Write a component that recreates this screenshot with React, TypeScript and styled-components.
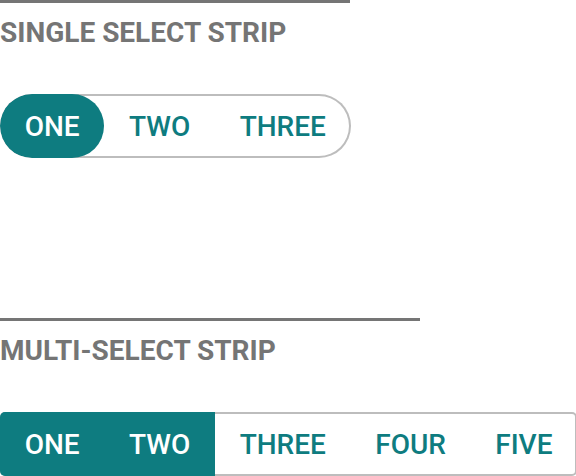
import React, { useState } from "react";
import styled, { createGlobalStyle } from "styled-components";

const Global = createGlobalStyle`
  html, body { margin: 0; padding: 0; background: #ffffff; }
  body { font-family: Roboto, "Noto Sans", sans-serif; }
`;

const TEAL = "#0e7c80";

const Page = styled.div`
  display: flex;
  flex-direction: column;
  width: 576px;
`;

const Section = styled.section<{ $ruleWidth: number; $height?: number }>`
  display: flex;
  flex-direction: column;
  align-items: flex-start;
  height: ${(p) => (p.$height ? `${p.$height}px` : "auto")};
  &::before {
    content: "";
    display: block;
    width: ${(p) => p.$ruleWidth}px;
    height: 3px;
    background: #757575;
  }
`;

const Heading = styled.h2`
  margin: 13px 0 0 0;
  font-family: Roboto, sans-serif;
  font-weight: 700;
  font-size: 28px;
  line-height: 33px;
  color: #757575;
  text-transform: uppercase;
`;

const Strip = styled.div<{ $round: boolean }>`
  margin-top: 45px;
  display: flex;
  height: 64px;
  box-shadow: inset 0 0 0 2px #bdbdbd;
  border-radius: ${(p) => (p.$round ? "32px" : "5px")};
  overflow: hidden;
`;

const Option = styled.button<{ $on: boolean; $round: boolean }>`
  height: 64px;
  padding: 0 24.7px;
  margin: 0;
  border: none;
  background: ${(p) => (p.$on ? TEAL : "transparent")};
  color: ${(p) => (p.$on ? "#ffffff" : TEAL)};
  border-radius: ${(p) => (p.$round ? "32px" : "0")};
  font-family: Roboto, sans-serif;
  font-weight: 500;
  font-size: 28px;
  text-transform: uppercase;
  cursor: pointer;
`;

export default function App() {
  const [single, setSingle] = useState("One");
  const [multi, setMulti] = useState<string[]>(["One", "Two"]);
  const toggle = (v: string) =>
    setMulti((m) => (m.includes(v) ? m.filter((x) => x !== v) : [...m, v]));

  return (
    <Page>
      <Global />
      <Section $ruleWidth={350} $height={318}>
        <Heading>Single Select Strip</Heading>
        <Strip $round>
          {["One", "Two", "Three"].map((v) => (
            <Option key={v} $round $on={single === v} onClick={() => setSingle(v)}>
              {v}
            </Option>
          ))}
        </Strip>
      </Section>
      <Section $ruleWidth={420}>
        <Heading>Multi-Select Strip</Heading>
        <Strip $round={false}>
          {["One", "Two", "Three", "Four", "Five"].map((v) => (
            <Option key={v} $round={false} $on={multi.includes(v)} onClick={() => toggle(v)}>
              {v}
            </Option>
          ))}
        </Strip>
      </Section>
    </Page>
  );
}
